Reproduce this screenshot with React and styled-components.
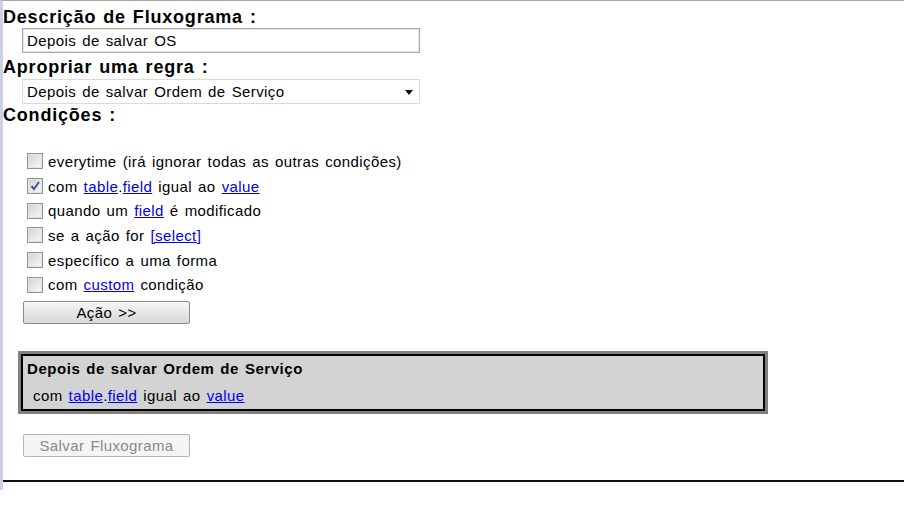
import React from "react";
import styled, { createGlobalStyle } from "styled-components";

const Global = createGlobalStyle`
  html, body { margin: 0; padding: 0; background: #fff; }
  body { font-family: "Liberation Sans", Arial, sans-serif; color: #000; }
`;

const Page = styled.div`
  border-top: 1px solid #a8a8a8;
  border-left: 3px solid #ccd2e6;
  min-height: 490px;
  box-sizing: border-box;
  display: flex;
  flex-direction: column;
  align-items: flex-start;
  letter-spacing: 0.4px;
  word-spacing: 1.5px;
`;

const Heading = styled.div`
  font-size: 18px;
  font-weight: bold;
  line-height: 21px;
  letter-spacing: 0.8px;
  word-spacing: 1.2px;
  margin-top: ${(p) => p.$mt}px;
`;

const TextField = styled.div`
  box-sizing: border-box;
  margin-left: 19px;
  width: 398px;
  height: 25px;
  border: 1px solid #a8a8a8;
  box-shadow: inset 0 0 0 1px #e6e6e6;
  display: flex;
  align-items: center;
  padding-left: 4px;
  font-size: 15px;
`;

const Select = styled.div`
  box-sizing: border-box;
  margin-left: 19px;
  margin-top: 1px;
  width: 398px;
  height: 25px;
  border: 1px solid #dadada;
  display: flex;
  align-items: center;
  justify-content: space-between;
  padding: 0 6px 0 4px;
  font-size: 15px;
`;

const Arrow = styled.span`
  width: 0;
  height: 0;
  border-left: 4px solid transparent;
  border-right: 4px solid transparent;
  border-top: 5px solid #111;
  margin-top: 2px;
`;

const List = styled.div`
  margin-top: 23px;
  margin-left: 24px;
  display: flex;
  flex-direction: column;
`;

const Row = styled.div`
  height: 24.7px;
  display: flex;
  align-items: center;
  gap: 5px;
  font-size: 15px;
  white-space: pre;
`;

const Box = styled.span`
  box-sizing: border-box;
  width: 16px;
  height: 16px;
  border: 1px solid #939393;
  background: linear-gradient(135deg, #d0d0d0 0%, #eaeaea 60%, #f8f8f8 100%);
  box-shadow: inset 0 0 0 1px #e4e4e4;
  display: flex;
  align-items: center;
  justify-content: center;
`;

const Link = styled.a`
  color: #0000ee;
  text-decoration: underline;
  cursor: pointer;
`;

const Button = styled.button`
  box-sizing: border-box;
  margin-left: 20px;
  margin-top: ${(p) => p.$mt}px;
  width: 167px;
  height: 23px;
  border: 1px solid ${(p) => (p.disabled ? "#b4b4b4" : "#8c8c8c")};
  border-radius: 2px;
  background: ${(p) =>
    p.disabled ? "#f4f4f4" : "linear-gradient(#f6f6f6, #e6e6e6 50%, #d8d8d8)"};
  color: ${(p) => (p.disabled ? "#8a8a8a" : "#000")};
  font-family: "Liberation Sans", Arial, sans-serif;
  font-size: 15px;
  letter-spacing: 0.4px;
  word-spacing: 1.5px;
  padding: 0;
  line-height: 21px;
`;

const Summary = styled.div`
  box-sizing: border-box;
  margin-left: 15px;
  margin-top: 27px;
  width: 750px;
  border: 3px solid #808080;
  box-shadow: inset 0 0 0 2px #000;
  background: #d3d3d3;
  padding: 6px 2px 7px 5px;
  font-size: 15px;
  line-height: 17px;
`;

const SummaryTitle = styled.div`
  font-weight: bold;
  padding-left: 1px;
  letter-spacing: 0.55px;
  word-spacing: 1.2px;
`;

const SummaryLine = styled.div`
  margin-top: 10px;
  padding-left: 7px;
`;

const Rule = styled.div`
  align-self: stretch;
  margin-top: 23px;
  height: 2px;
  background: #111;
`;

const Check = () => (
  <svg width="12" height="12" viewBox="0 0 12 12">
    <path d="M2.5 6 L5 9 L10 2" fill="none" stroke="#4257a0" strokeWidth="2" />
  </svg>
);

export default function App() {
  return (
    <>
      <Global />
      <Page>
        <Heading $mt={6}>Descrição de Fluxograma :</Heading>
        <TextField>Depois de salvar OS</TextField>
        <Heading $mt={4}>Apropriar uma regra :</Heading>
        <Select>
          <span>Depois de salvar Ordem de Serviço</span>
          <Arrow />
        </Select>
        <Heading $mt={1}>Condições :</Heading>
        <List>
          <Row>
            <Box />
            <span>everytime (irá ignorar todas as outras condições)</span>
          </Row>
          <Row>
            <Box>
              <Check />
            </Box>
            <span>
              com <Link>table</Link>.<Link>field</Link> igual ao <Link>value</Link>
            </span>
          </Row>
          <Row>
            <Box />
            <span>
              quando um <Link>field</Link> é modificado
            </span>
          </Row>
          <Row>
            <Box />
            <span>
              se a ação for <Link>[select]</Link>
            </span>
          </Row>
          <Row>
            <Box />
            <span>específico a uma forma</span>
          </Row>
          <Row>
            <Box />
            <span>
              com <Link>custom</Link> condição
            </span>
          </Row>
        </List>
        <Button $mt={4}>Ação &gt;&gt;</Button>
        <Summary>
          <SummaryTitle>Depois de salvar Ordem de Serviço</SummaryTitle>
          <SummaryLine>
            com <Link>table</Link>.<Link>field</Link> igual ao <Link>value</Link>
          </SummaryLine>
        </Summary>
        <Button $mt={20} disabled>
          Salvar Fluxograma
        </Button>
        <Rule />
      </Page>
    </>
  );
}
